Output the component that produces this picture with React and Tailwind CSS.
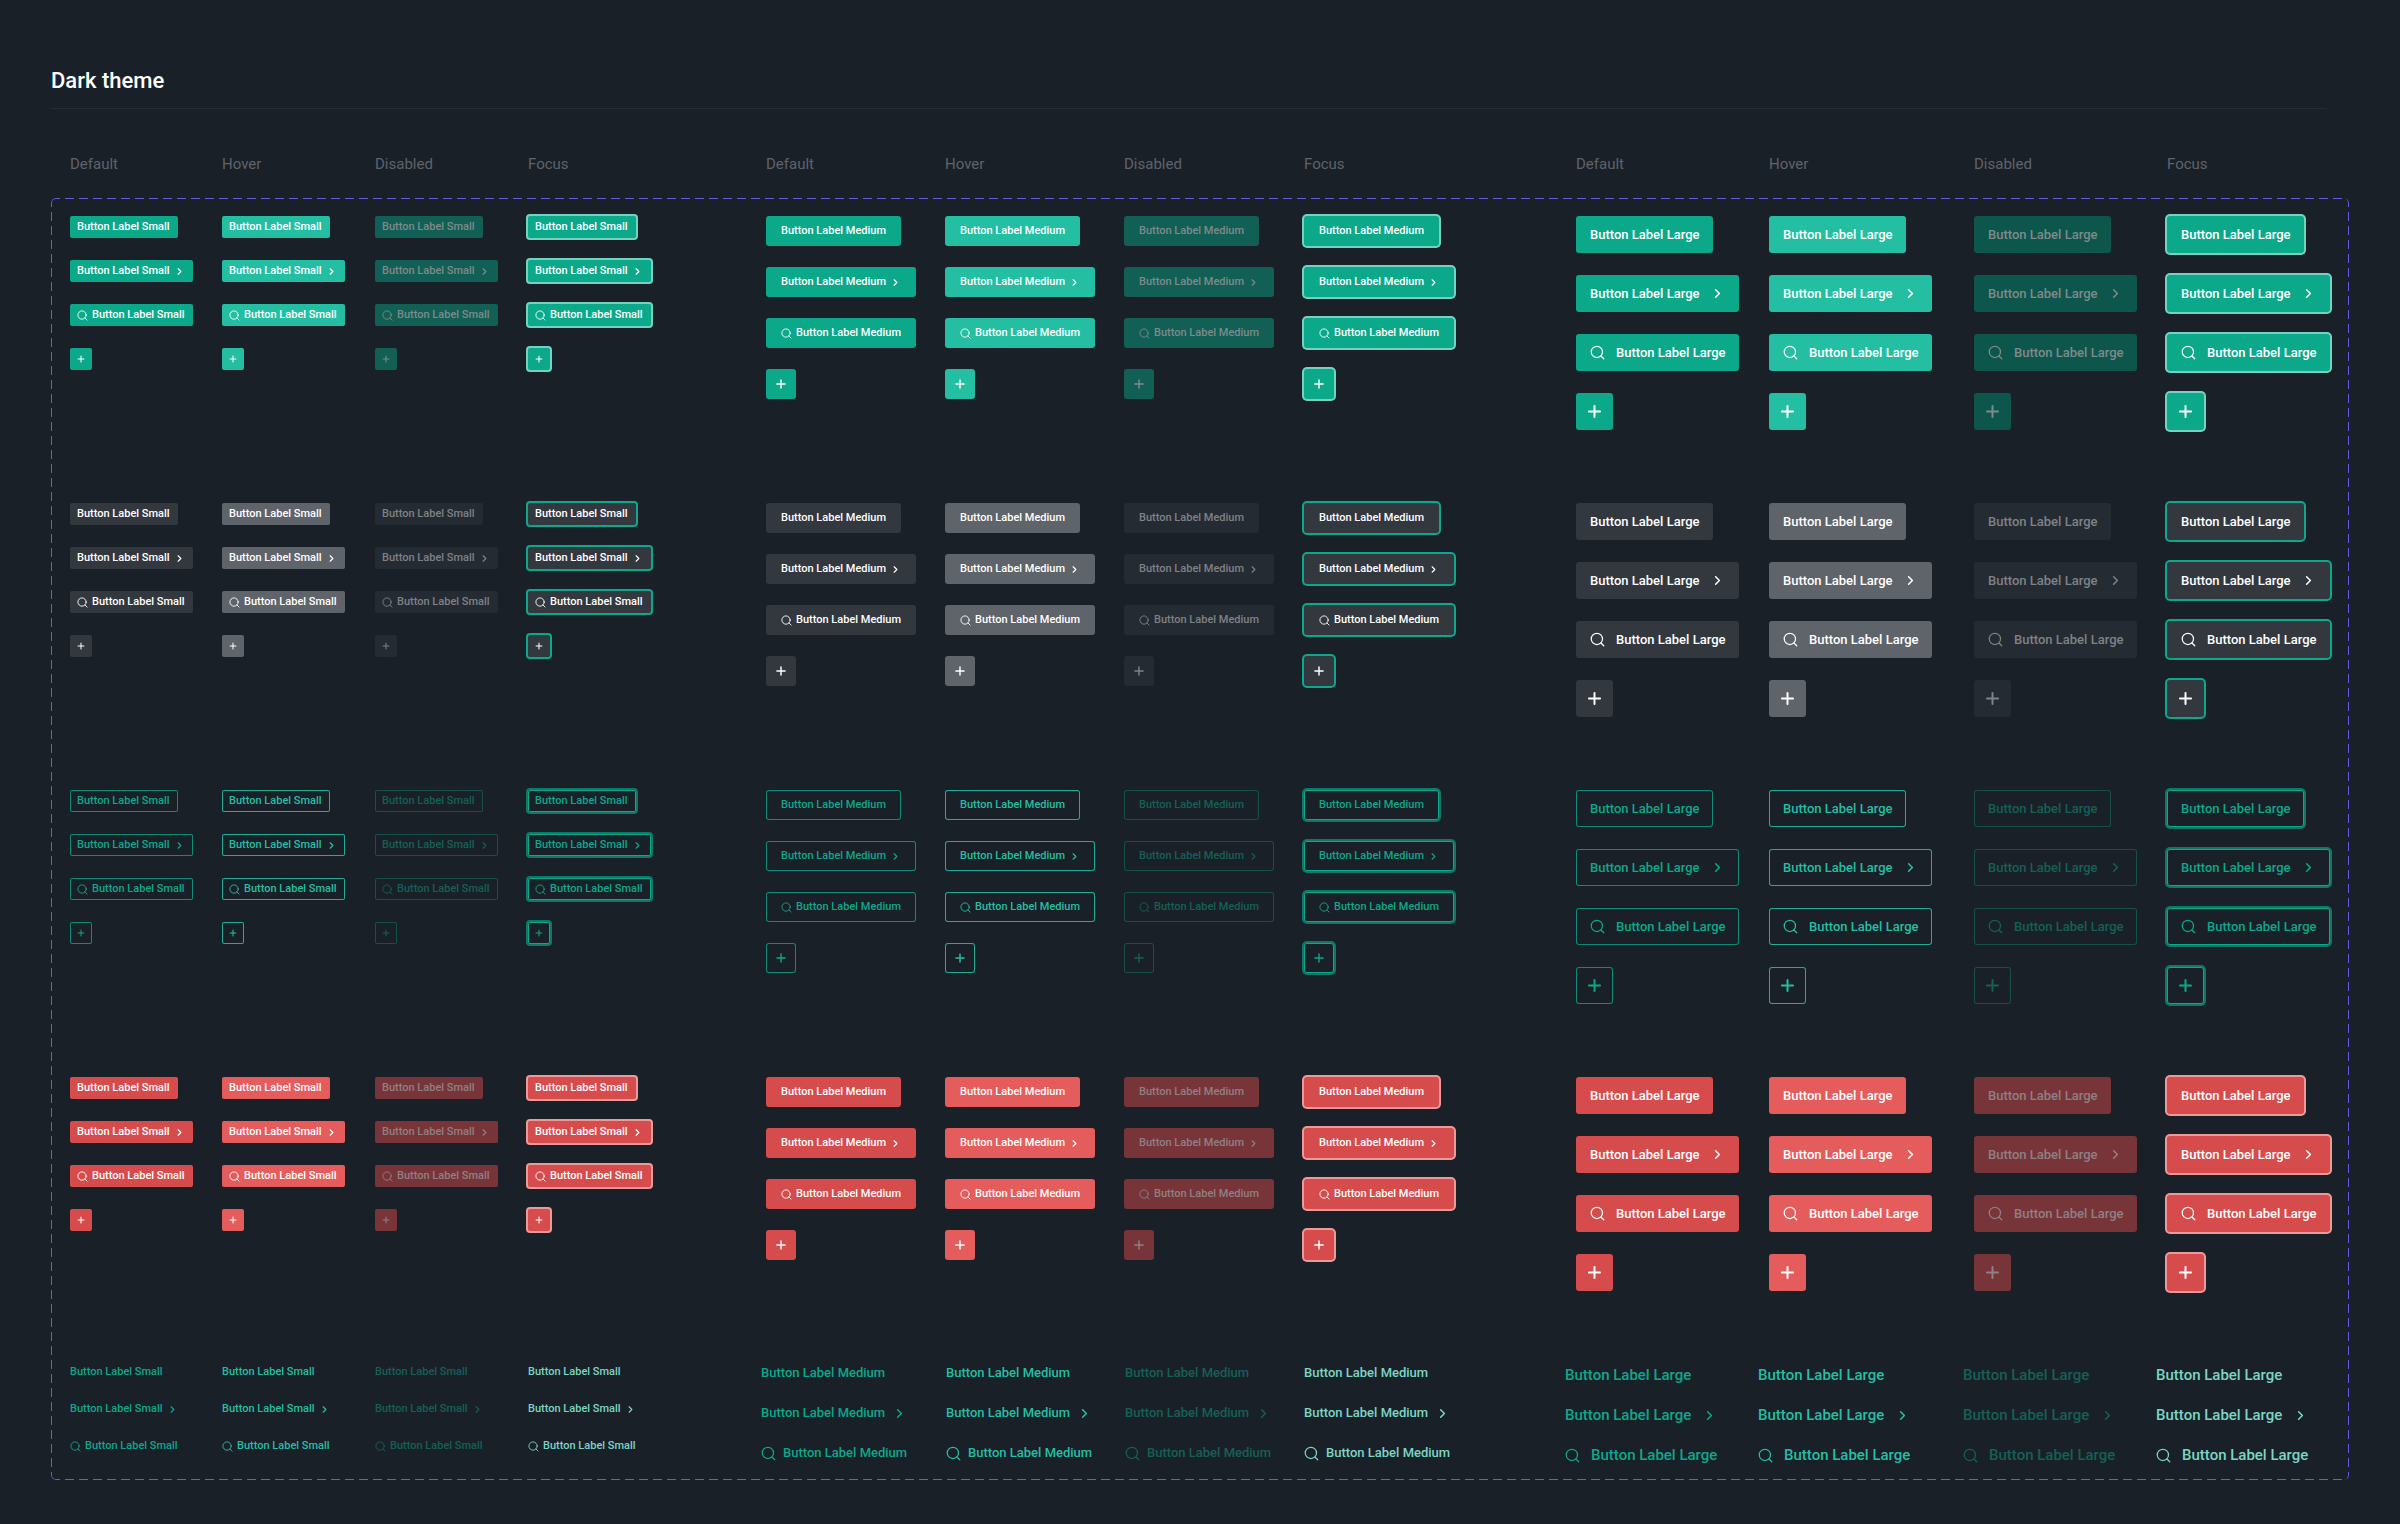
import React from 'react';
import clsx from 'clsx';
import { ChevronRight, Plus } from 'lucide-react';

// Fill, text and border colours of each button kind in each state
const KINDS = {
  primary: {
    default: 'bg-[#0ca88a] text-white',
    hover: 'bg-[#24bfa3] text-white',
    disabled: 'bg-[#125f55] text-[#7f8a8b]',
    focus: 'bg-[#0ca88a] text-white ring-2 ring-[#74d3c0]',
  },
  secondary: {
    default: 'bg-[#33383f] text-white',
    hover: 'bg-[#5f636a] text-white',
    disabled: 'bg-[#252b33] text-[#7f8286]',
    focus: 'bg-[#33383f] text-white ring-2 ring-[#0ca88a]',
  },
  outline: {
    default: 'inset-ring inset-ring-[#0e8b75] text-[#0ca88a]',
    hover: 'inset-ring inset-ring-[#1fae94] text-[#24bfa3]',
    disabled: 'inset-ring inset-ring-[#15504a] text-[#146056]',
    focus: 'inset-ring inset-ring-[#0ca88a] text-[#0ca88a] ring-2 ring-[#0e7766]',
  },
  danger: {
    default: 'bg-[#d64c4c] text-white',
    hover: 'bg-[#e55c5c] text-white',
    disabled: 'bg-[#783539] text-[#8f8084]',
    focus: 'bg-[#d64c4c] text-white ring-2 ring-[#ec9999]',
  },
};

const LINKS = {
  default: 'text-[#0ca88a]',
  hover: 'text-[#24bfa3]',
  disabled: 'text-[#146056]',
  focus: 'text-[#7ad6c4]',
};

const STATES = [
  { id: 'default', title: 'Default' },
  { id: 'hover', title: 'Hover' },
  { id: 'disabled', title: 'Disabled' },
  { id: 'focus', title: 'Focus' },
];

const SIZES = [
  {
    id: 'small',
    label: 'Button Label Small',
    grid: 'grid-cols-[152px_153px_153px_238px]',
    linkGrid: 'grid-cols-[152px_153px_153px_233px]',
    column: 'gap-[22px]',
    button: 'h-[22px] rounded-xs pr-[8px] pl-[7px] text-[11px]',
    square: 'size-[22px] rounded-xs',
    gap: 'gap-[4px]',
    icon: 'size-[11px]',
    plus: 'size-[10px]',
    link: 'h-[17px] text-[11px]',
    linkGap: 'gap-[4px]',
    linkIcon: 'size-[11px]',
    linkColumn: 'gap-[20px]',
  },
  {
    id: 'medium',
    label: 'Button Label Medium',
    grid: 'grid-cols-[179px_179px_180px_272px]',
    linkGrid: 'grid-cols-[185px_179px_179px_261px]',
    column: 'gap-[21px]',
    button: 'h-[30px] rounded-[3px] px-[15px] text-[11px]',
    square: 'size-[30px] rounded-[3px]',
    gap: 'gap-[4px]',
    icon: 'size-[11px]',
    plus: 'size-[14px]',
    link: 'h-[18px] text-[13px]',
    linkGap: 'gap-[7px]',
    linkIcon: 'size-[15px]',
    linkColumn: 'gap-[22px]',
  },
  {
    id: 'large',
    label: 'Button Label Large',
    grid: 'grid-cols-[193px_205px_193px_166px]',
    linkGrid: 'grid-cols-[193px_205px_193px_166px]',
    column: 'gap-[22px]',
    button: 'h-[37px] rounded-[3px] px-[14px] text-[13px]',
    square: 'size-[37px] rounded-[3px]',
    // the large primary button dims further than the other sizes
    primaryDisabled: 'bg-[#0d564b] text-[#7f8a8b]',
    gap: 'gap-[11px]',
    icon: 'size-[15px]',
    plus: 'size-[19px]',
    link: 'h-[22px] text-[15px]',
    linkGap: 'gap-[11px]',
    linkIcon: 'size-[15px]',
    linkColumn: 'gap-[18px]',
  },
];

const SearchIcon = ({ className }) => (
  <svg viewBox="0 0 24 24" fill="none" stroke="currentColor" strokeWidth="2" strokeLinecap="round" className={className}>
    <circle cx="11" cy="11" r="9" />
    <path d="M17.5 17.5L22 22" />
  </svg>
);

const Button = ({ kind, state, size, variant }) => {
  const isDimmed = kind === 'primary' && state === 'disabled' && size.primaryDisabled;

  return (
    <button
      type="button"
      disabled={state === 'disabled'}
      aria-label={variant === 'icon' ? 'Add' : undefined}
      className={clsx(
        'flex items-center justify-center font-medium whitespace-nowrap',
        variant === 'icon' ? size.square : clsx(size.button, size.gap),
        isDimmed ? size.primaryDisabled : KINDS[kind][state]
      )}
    >
      {variant === 'leading' && <SearchIcon className={size.icon} />}
      {variant !== 'icon' && <span>{size.label}</span>}
      {variant === 'trailing' && <ChevronRight className={size.icon} strokeWidth={2.5} />}
      {variant === 'icon' && <Plus className={size.plus} strokeWidth={2.5} />}
    </button>
  );
};

const TextLink = ({ state, size, variant }) => (
  <a
    href="#"
    className={clsx('flex items-center font-medium whitespace-nowrap', size.link, size.linkGap, LINKS[state])}
  >
    {variant === 'leading' && <SearchIcon className={size.linkIcon} />}
    <span>{size.label}</span>
    {variant === 'trailing' && <ChevronRight className={size.linkIcon} strokeWidth={2.5} />}
  </a>
);

const ButtonRow = ({ kind }) => (
  <section className="flex h-[287px] justify-between">
    {SIZES.map((size) => (
      <div key={size.id} className={clsx('grid', size.grid)}>
        {STATES.map((state) => (
          <div key={state.id} className={clsx('flex flex-col items-start', size.column)}>
            {['label', 'trailing', 'leading', 'icon'].map((variant) => (
              <Button key={variant} kind={kind} state={state.id} size={size} variant={variant} />
            ))}
          </div>
        ))}
      </div>
    ))}
  </section>
);

const LinkRow = () => (
  <section className="flex justify-between pr-[11px]">
    {SIZES.map((size) => (
      <div key={size.id} className={clsx('grid', size.linkGrid)}>
        {STATES.map((state) => (
          <div key={state.id} className={clsx('flex flex-col items-start', size.linkColumn)}>
            {['label', 'trailing', 'leading'].map((variant) => (
              <TextLink key={variant} state={state.id} size={size} variant={variant} />
            ))}
          </div>
        ))}
      </div>
    ))}
  </section>
);

const App = () => {
  return (
    <main className="min-h-screen bg-[#1a2028] px-[51px] pt-[66px] pb-[43px] font-['Roboto',sans-serif] text-white">
      <header className="mr-[22px] border-b border-[#272d35] pb-[12px]">
        <h1 className="text-[22px] leading-[30px] font-medium">Dark theme</h1>
      </header>

      {/* State names above each size group */}
      <div className="mt-[44px] flex justify-between pr-[16px] pl-[19px] text-[15px] leading-[22px] text-[#5f636a]">
        {SIZES.map((size) => (
          <div key={size.id} className={clsx('grid', size.grid)}>
            {STATES.map((state) => (
              <span key={state.id}>{state.title}</span>
            ))}
          </div>
        ))}
      </div>

      <div className="relative mt-[23px] pt-[18px] pr-[16px] pb-[14px] pl-[19px]">
        {/* Dashed frame */}
        <div className="pointer-events-none absolute inset-0 rounded-[5px] border-y border-[#6b58e0] [mask-image:repeating-linear-gradient(to_right,#000_0_9px,transparent_9px_14px)]" />
        <div className="pointer-events-none absolute inset-0 rounded-[5px] border-x border-[#6b58e0] [mask-image:repeating-linear-gradient(to_bottom,#000_0_9px,transparent_9px_14px)]" />

        {Object.keys(KINDS).map((kind) => (
          <ButtonRow key={kind} kind={kind} />
        ))}
        <LinkRow />
      </div>
    </main>
  );
};

export default App;
